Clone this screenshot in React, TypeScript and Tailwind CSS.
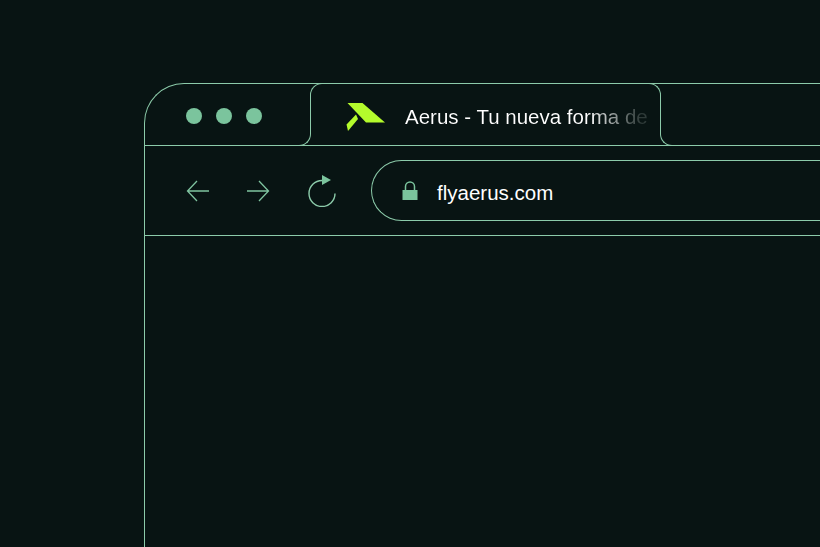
function Logo() {
  return (
    <svg width="40" height="30" viewBox="346 102 40 30" className="shrink-0">
      <polygon points="347.5,103 362.5,103 385,122.5 366,122.5" fill="#b4fb2c" />
      <polygon points="356,114.5 358,119 348,131 346.5,124.5" fill="#b4fb2c" />
    </svg>
  );
}

function Arrow({ flip }: { flip?: boolean }) {
  return (
    <svg width="24" height="22" viewBox="0 0 24 22" fill="none" stroke="#7fc4a0" strokeWidth="1.3" className={flip ? "rotate-180" : ""}>
      <path d="M23 11H1.5M11 1L1.5 11L11 21" />
    </svg>
  );
}

function Reload() {
  return (
    <svg width="30" height="34" viewBox="0 0 30 34" fill="none" className="shrink-0">
      <path d="M15 7.5A13 13 0 1 0 28 20.5" stroke="#8ccbaa" strokeWidth="1.4" />
      <polygon points="15,2 24,7 15,12" fill="#7bc49d" />
    </svg>
  );
}

function Lock() {
  return (
    <svg width="16" height="20" viewBox="0 0 16 20" fill="none" className="shrink-0">
      <path d="M3.5 10V5.5a4.5 4.5 0 0 1 9 0V10" stroke="#7bc49d" strokeWidth="1.5" />
      <rect x="0.5" y="9" width="15" height="10" fill="#7bc49d" />
    </svg>
  );
}

export default function App() {
  return (
    <div className="w-[820px] h-[547px] overflow-hidden bg-[#081413] pt-[83px] pl-[144px] font-['Liberation_Sans',sans-serif]">
      <div className="w-[800px] h-[600px] border-l border-t border-[#8ccbaa] rounded-tl-[40px]">
        <div className="grid grid-cols-[166px_350px_1fr] grid-rows-[31px_30px] border-b border-[#8ccbaa]">
          <div className="col-start-1 row-start-1 row-span-2 flex items-center gap-[14px] pl-[41px] pt-[2px]">
            <span className="w-4 h-4 rounded-full bg-[#7bc49d]" />
            <span className="w-4 h-4 rounded-full bg-[#7bc49d]" />
            <span className="w-4 h-4 rounded-full bg-[#7bc49d]" />
          </div>
          <div className="col-start-1 row-start-2 justify-self-end w-[12px] -mb-px border-r border-b border-[#8ccbaa] rounded-br-[12px]" />
          <div className="col-start-2 row-start-1 -ml-px -mt-px border-l border-r border-t border-[#8ccbaa] rounded-t-[12px]" />
          <div className="col-start-2 row-start-1 row-span-2 flex items-center pl-[35px] pt-[5px] gap-[19px]">
            <Logo />
            <span className="text-[20.5px] leading-[26px] whitespace-nowrap bg-linear-to-r from-white from-[76%] to-[#2f3b39] to-[97%] bg-clip-text text-transparent">
              Aerus - Tu nueva forma de
            </span>
          </div>
          <div className="col-start-3 row-start-2 justify-self-start w-[12px] -mb-px -ml-px border-l border-b border-[#8ccbaa] rounded-bl-[12px]" />
        </div>
        <div className="h-[90px] border-b border-[#8ccbaa] flex items-center pl-[41px]">
          <Arrow />
          <div className="ml-[36px]">
            <Arrow flip />
          </div>
          <div className="ml-[37px] -mt-[2px]">
            <Reload />
          </div>
          <div className="ml-[34px] flex-1 h-[61px] border-l border-t border-b border-[#8ccbaa] rounded-l-full flex items-center pl-[30px] gap-[19px]">
            <Lock />
            <span className="text-[20.5px] leading-none text-white pt-[5px]">flyaerus.com</span>
          </div>
        </div>
      </div>
    </div>
  );
}
